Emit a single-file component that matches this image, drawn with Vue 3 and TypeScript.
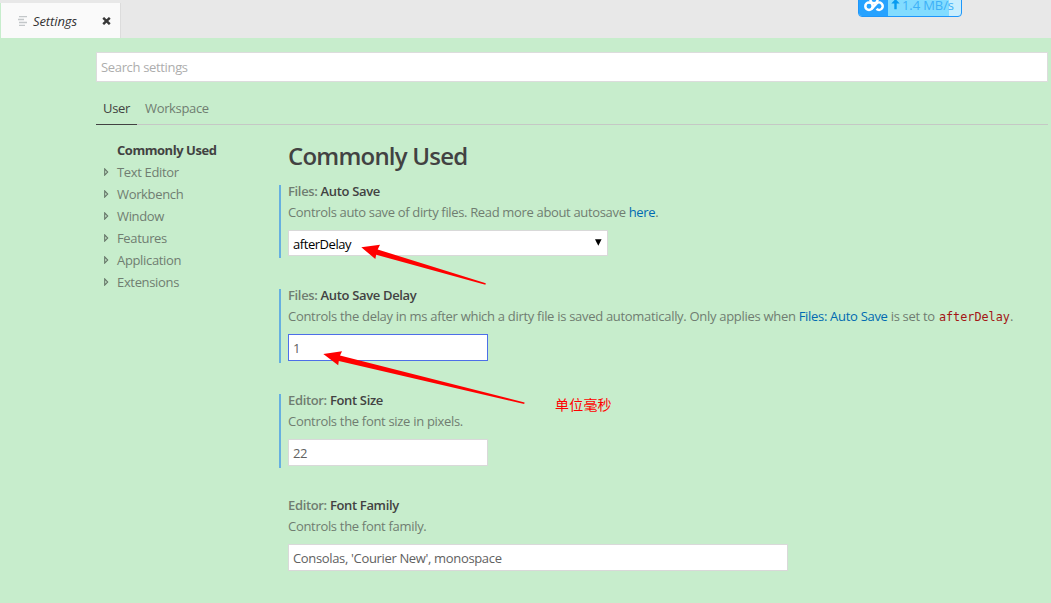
<script setup lang="ts">
interface Setting {
  id: string
  group: string
  name: string
  kind: 'select' | 'number' | 'text'
  value: string
  modified: boolean
}

const sections: string[] = ['Text Editor', 'Workbench', 'Window', 'Features', 'Application', 'Extensions']

const settings: Setting[] = [
  { id: 'auto-save', group: 'Files:', name: 'Auto Save', kind: 'select', value: 'afterDelay', modified: true },
  { id: 'auto-save-delay', group: 'Files:', name: 'Auto Save Delay', kind: 'number', value: '1', modified: true },
  { id: 'font-size', group: 'Editor:', name: 'Font Size', kind: 'number', value: '22', modified: true },
  { id: 'font-family', group: 'Editor:', name: 'Font Family', kind: 'text', value: "Consolas, 'Courier New', monospace", modified: false },
]
</script>

<template>
  <div class="window">
    <header class="tabbar">
      <div class="tab">
        <svg class="tab-icon" width="10" height="10" viewBox="0 0 10 10">
          <path d="M1 .5h8M0 3.5h6M1 6.5h8M1 9.5h6" stroke="#c3c7c9" stroke-width="1.5" />
        </svg>
        <span class="tab-label">Settings</span>
        <svg class="tab-close" width="9" height="8" viewBox="0 0 9 8">
          <path d="M1.2 .8l6.6 6.4M7.8 .8L1.2 7.2" stroke="#383838" stroke-width="2.4" />
        </svg>
      </div>
    </header>

    <div class="speed">
      <div class="speed-logo">
        <svg width="22" height="16" viewBox="0 0 22 16" fill="none" stroke="#fff" stroke-width="2.5">
          <circle cx="11" cy="1.6" r="3.6" />
          <circle cx="6" cy="8.2" r="3.7" />
          <path d="M8.6 10.8L13.4 5.6" />
          <path d="M13.4 5.6a3.7 3.7 0 1 1 .1 5.3" />
        </svg>
      </div>
      <div class="speed-fill"></div>
      <svg class="speed-arrow" width="9" height="11" viewBox="0 0 9 11">
        <path d="M4.5 0L8.7 4.6H5.7V10.3H3.3V4.6H.3Z" fill="#079bf0" />
      </svg>
      <span class="speed-text">1.4 MB/s</span>
    </div>

    <main class="editor">
      <input class="search" placeholder="Search settings" />
      <nav class="scopes">
        <span class="scope active">User</span>
        <span class="scope workspace">Workspace</span>
      </nav>
      <div class="body">
        <ul class="toc">
          <li class="toc-row selected"><span class="toc-label">Commonly Used</span></li>
          <li v-for="s in sections" :key="s" class="toc-row">
            <svg class="twistie" width="5" height="8" viewBox="0 0 5 8">
              <path d="M.7 .9L3.7 4L.7 7.1Z" fill="none" stroke="#667568" stroke-width="1.1" />
            </svg>
            <span class="toc-label">{{ s }}</span>
          </li>
        </ul>
        <section class="settings">
          <h1 class="heading">Commonly Used</h1>
          <article v-for="s in settings" :key="s.id" class="setting" :class="[s.id, { modified: s.modified }]">
            <div class="title"><span class="group">{{ s.group }}</span> <span class="name">{{ s.name }}</span></div>
            <p v-if="s.id === 'auto-save'" class="desc">Controls auto save of dirty files. Read more about autosave <a class="link">here</a>.</p>
            <p v-else-if="s.id === 'auto-save-delay'" class="desc">Controls the delay in ms after which a dirty file is saved automatically. Only applies when <a class="link">Files: Auto Save</a> is set to <code class="code">afterDelay</code>.</p>
            <p v-else-if="s.id === 'font-size'" class="desc">Controls the font size in pixels.</p>
            <p v-else class="desc">Controls the font family.</p>
            <div class="control" :class="s.kind">
              <span>{{ s.value }}</span>
              <svg v-if="s.kind === 'select'" width="7" height="7" viewBox="0 0 7 7"><path d="M0 .3H6.6L3.3 6.7Z" fill="#000" /></svg>
            </div>
          </article>
        </section>
      </div>
    </main>

    <svg class="notes" width="1051" height="603" viewBox="0 0 1051 603">
      <path d="M361.3 247.2L380 244.7L377.7 249.5L485.8 283.2L485.4 284.8L376.2 254.8L375.3 259Z" fill="#f00" />
      <path d="M323.3 354L342 351.3L340 355.5L524.6 402.5L524.2 404L338.8 361L338.2 365.3Z" fill="#f00" />
    </svg>
    <span class="note-text">单位毫秒</span>
  </div>
</template>

<style>
html, body { margin: 0; overflow: hidden; background: #c7edcc; }
</style>

<style scoped>
.window {
  position: relative;
  width: 1051px;
  height: 603px;
  overflow: hidden;
  background: #c7edcc;
  color: #707d71;
  font: 13px/18px "Open Sans", "Noto Sans", sans-serif;
  letter-spacing: -0.34px;
  white-space: nowrap;
}
.tabbar { height: 35px; padding-top: 3px; background: #e8e8e8; }
.tab {
  box-sizing: border-box;
  display: flex;
  align-items: center;
  width: 121px;
  height: 35px;
  padding-left: 17px;
  border-left: 1px solid #c7edcc;
  border-right: 1px solid #dcdcdc;
  background: #fafafa;
}
.tab-icon { margin-top: 1px; }
.tab-label { width: 69px; margin-left: 5px; color: #333; font-style: italic; letter-spacing: -0.1px; }
.tab-close { margin-top: 1px; }

.speed {
  position: absolute;
  left: 858px;
  top: -8px;
  box-sizing: border-box;
  display: flex;
  width: 104px;
  height: 25px;
  overflow: hidden;
  border: 1px solid #1e96fa;
  border-radius: 4px;
  background: #c9eefe;
}
.speed-logo { width: 29px; background: #26a2ff; }
.speed-logo svg { display: block; margin: 5px 0 0 4px; }
.speed-fill { width: 61px; background: #82dcff; }
.speed-arrow { position: absolute; left: 32px; top: 6px; }
.speed-text { position: absolute; left: 43px; top: 7px; color: #3db0f7; line-height: 10px; letter-spacing: -0.1px; }

.editor { padding: 14px 3px 0 96px; }
.search {
  display: block;
  box-sizing: border-box;
  width: 952px;
  height: 30px;
  padding: 0 4px 1px;
  border: 1px solid #dcdcdc;
  background: #fff;
  font: inherit;
  letter-spacing: -0.34px;
  outline: none;
}
.search::placeholder { color: #adadad; opacity: 1; }
.scopes { display: flex; height: 42px; border-bottom: 1px solid #c5c8c5; }
.scope { height: 25px; margin-bottom: -1px; padding: 17px 7px 0; border-bottom: 1px solid transparent; }
.scope.active { width: 27px; border-color: #424242; color: #424242; }
.scope.workspace { padding-left: 8px; }
.body { display: flex; }
.toc { width: 183px; margin: 14px 0 0; padding: 0; list-style: none; }
.toc-row { display: flex; align-items: center; height: 22px; padding-left: 8px; }
.toc-row.selected { padding-left: 21px; color: #424242; font-weight: 700; letter-spacing: -0.46px; }
.twistie { width: 5px; margin-right: 8px; }
.settings { flex: 1; }
.heading {
  height: 36px;
  margin: 13px 0 11px 9px;
  color: #424242;
  font-size: 24px;
  font-weight: 600;
  line-height: 36px;
  letter-spacing: -0.78px;
}
.setting {
  display: flow-root;
  box-sizing: border-box;
  height: 73px;
  margin-bottom: 31px;
  padding-left: 7px;
  border-left: 2px solid transparent;
}
.setting.modified { border-color: #66afe0; }
.auto-save-delay, .font-size { height: 74px; }
.title { height: 18px; margin-top: -3px; font-weight: 600; }
.name { color: #424242; }
.desc { height: 18px; margin: 3px 0 9px; }
.auto-save-delay .desc { letter-spacing: -0.3px; }
.font-size .desc, .font-family .desc { letter-spacing: -0.31px; }
.link { color: #006ab1; }
.code { margin-left: 1px; color: #a31515; font: 11.8px/18px "DejaVu Sans Mono", monospace; letter-spacing: 0; }
.control {
  box-sizing: border-box;
  display: flex;
  align-items: center;
  justify-content: space-between;
  width: 200px;
  height: 27px;
  padding: 1px 4px 0;
  border: 1px solid #d9d9d9;
  background: #fff;
  color: #616161;
}
.control.select { width: 320px; height: 26px; padding: 2px 5px 0 4px; color: #000; letter-spacing: -0.45px; }
.control.select svg { margin-top: -3px; }
.control.text { width: 500px; }
.auto-save-delay .control { border-color: #4d6fe8; }

.notes { position: absolute; left: 0; top: 0; pointer-events: none; }
.note-text {
  position: absolute;
  left: 555px;
  top: 395px;
  color: #f00;
  font: 14px/18px "Noto Sans CJK SC", sans-serif;
  letter-spacing: 0.2px;
}
</style>
